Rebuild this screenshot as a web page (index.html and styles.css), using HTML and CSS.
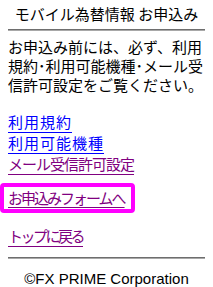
FILE: index.html
```
<!DOCTYPE html>
<html lang="ja">
<head>
    <meta charset="UTF-8">
    <meta name="viewport" content="width=device-width, initial-scale=1.0">
    <title>モバイル為替情報 お申込み</title>
    <link rel="stylesheet" href="styles.css">
</head>
<body>
<div class="page">
    <div class="title">モバイル為替情報 お申込み</div>
    <hr class="rule">
    <p class="intro">お申込み前には、必ず、利用<br>規約･利用可能機種･メール受<br>信許可設定をご覧ください。</p>
    <div class="links">
        <a href="#kiyaku" class="wide">利用規約</a><br>
        <a href="#kishu" class="wide">利用可能機種</a><br>
        <a href="#mail" class="visited narrow">メール受信許可設定</a>
    </div>
    <div class="focus">
        <a href="#form" class="visited tight">お申込みフォームへ</a>
    </div>
    <div class="back">
        <a href="#top" class="visited tighter">トップに戻る</a>
    </div>
    <hr class="rule">
    <div class="copy">©FX PRIME Corporation</div>
</div>
</body>
</html>
```

FILE: styles.css
```
body {
    margin: 0;
    background: #ffffff;
    color: #000000;
    font-family: "Noto Sans CJK JP", "DejaVu Sans", sans-serif;
    font-size: 15px;
}
.page {
    padding: 4px 8px 0;
}
.title {
    text-align: center;
    line-height: 19px;
}
.rule {
    height: 0;
    margin: 6px 0 0;
    border: none;
    border-top: 1px solid #6e6e6e;
    border-bottom: 1px solid #a8a8a8;
}
.intro {
    margin: 6px 0 0;
    line-height: 19px;
    white-space: nowrap;
}
a {
    color: #0000ff;
    text-decoration: underline;
    text-decoration-thickness: 1px;
    text-underline-offset: 4px;
}
a.visited {
    color: #800080;
}
.links {
    margin-top: 17px;
    line-height: 21px;
}
.wide {
    letter-spacing: 1px;
}
.narrow {
    letter-spacing: -1px;
}
.tight {
    letter-spacing: -2px;
}
.tighter {
    letter-spacing: -2.5px;
}
.focus {
    display: inline-block;
    margin: 9px 0 0 -8px;
    padding: 0 6px 0 4px;
    border: 4px solid #ff00ff;
    border-radius: 4px;
    line-height: 22px;
}
.focus a {
    text-underline-offset: 3px;
}
.back {
    margin-top: 13px;
    line-height: 20px;
}
.back + .rule {
    margin-top: 11px;
}
.copy {
    margin-top: 10px;
    text-align: center;
    font-family: "Liberation Sans", Arial, sans-serif;
    line-height: 19px;
}
```
